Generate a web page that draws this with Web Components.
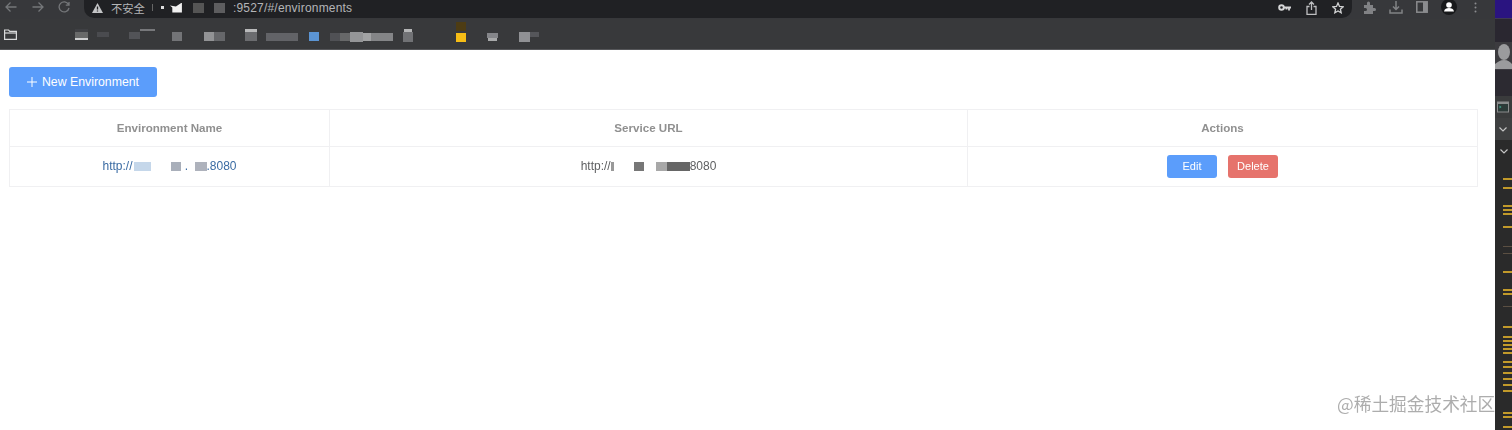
<!DOCTYPE html>
<html lang="zh"><head><meta charset="utf-8"><title>Environments</title>
<style>
html,body{margin:0;padding:0;background:#fff;overflow:hidden}
body{width:1512px;height:430px;font-family:"Liberation Sans","Noto Sans CJK SC",sans-serif}
</style></head><body>
<app-shell>
  <browser-window>
    <browser-toolbar></browser-toolbar>
    <bookmark-bar></bookmark-bar>
    <env-page></env-page>
  </browser-window>
  <side-rail></side-rail>
</app-shell>
<script>
function def(name,html,setup){
  customElements.define(name,class extends HTMLElement{
    constructor(){super();this.attachShadow({mode:'open'}).innerHTML=html;}
    connectedCallback(){if(setup)setup(this.shadowRoot,this);}
  });
}
def('app-shell',`<style>:host{display:flex;width:1512px;height:430px;position:relative;overflow:hidden}</style><slot></slot>
<div style="position:absolute;left:1337px;top:391px;font:17.700px/25px 'Noto Sans CJK SC',sans-serif;color:#adadad;white-space:nowrap;filter:blur(.3px)">@稀土掘金技术社区</div>`);
def('browser-window',`<style>:host{display:flex;flex-direction:column;width:1495px;flex:none;height:430px}</style><slot></slot>`);

const ic=(w,h,body,ml)=>`<svg width="${w}" height="${h}" viewBox="0 0 ${w} ${h}" style="flex:none;margin-left:${ml}px" fill="none" stroke="#9fa1a4" stroke-width="1.3">${body}</svg>`;
def('browser-toolbar',`<style>
:host{display:flex;align-items:flex-start;height:19px;background:#37383b;flex:none;color:#b4b5b7}
.bar{display:flex;align-items:center;box-sizing:border-box;width:1268px;height:18px;padding-bottom:3px;margin-left:14px;background:#202124;border-radius:0 0 10px 10px;flex:none}
.t{white-space:nowrap}
b{display:block;flex:none;filter:blur(.5px)}
.nav,.right{display:flex;align-items:center;height:14px;flex:none}
</style>
<div class="nav">
${ic(12,12,'<path d="M11.500 6H1M5.500 1.500 1 6l4.500 4.500" stroke="#75777a"/>',5)}
${ic(12,12,'<path d="M.5 6H11M6.500 1.500 11 6l-4.500 4.500" stroke="#75777a"/>',15)}
${ic(12,12,'<path d="M10.500 3.500A5 5 0 1 0 11 7M11 1v3.200H7.800" stroke="#75777a"/>',14)}
</div>
<div class="bar">
${ic(11,10,'<path d="M5.500 0 11 10H0z" fill="#c4c5c7" stroke="none"/><path d="M5.500 3.500v3M5.500 7.500v1" stroke="#202124"/>',8)}
<span class="t" style="margin-left:8px;font-size:11.300px">不安全</span>
<b style="width:1px;height:7px;background:#666;margin-left:7px"></b>
<b style="width:3px;height:3px;background:#ddd;margin-left:8px"></b>
<b style="width:12px;height:10px;background:#f1f1f1;margin-left:6px;clip-path:polygon(100% 0,100% 100%,20% 100%,20% 50%,0 30%,50% 40%)"></b>
<b style="width:11px;height:10px;background:#555;margin-left:11px"></b>
<b style="width:11px;height:10px;background:#5d5d5f;margin-left:10px"></b>
<span class="t" style="margin-left:8px;font-size:12px;letter-spacing:.2px">:9527/#/environments</span>
<span style="flex:1"></span>
${ic(13,9,'<circle cx="3.500" cy="4.500" r="2.300" stroke-width="2" stroke="#d5d6d7"/><path d="M6 4.500h7M11 4.500v3M8.500 4.500v2" stroke-width="1.800" stroke="#d5d6d7"/>',0)}
${ic(11,14,'<path d="M5.500 9V1M3 3.500 5.500 1 8 3.500M3.500 5.500H1v8h9v-8H7.500" stroke="#bdbec0"/>',15)}
${ic(12,12,'<path d="M6 1l1.500 3.400 3.700.4-2.800 2.400.8 3.600L6 9l-3.200 1.800.8-3.600L.8 4.800l3.700-.4z" stroke="#d0d1d2"/>',15)}
<span style="width:8px;flex:none"></span>
</div>
<div class="right">
${ic(13,13,'<path d="M1 4h3V2a1.500 1.500 0 0 1 3 0v2h3v3h1.500a1.500 1.500 0 0 1 0 3H10v3H1v-3h1.500a1.500 1.500 0 0 0 0-3H1z" fill="#818285" stroke="none"/>',11)}
${ic(14,14,'<path d="M7 9V1M4 6.500 7 9.500l3-3M1 9.500V13h12V9.500" stroke="#818285" stroke-width="1.500"/>',13)}
${ic(12,12,'<rect x=".8" y=".8" width="10.400" height="10.400" stroke="#8b8c8f" stroke-width="1.500"/><rect x="7" y="1" width="4" height="10" fill="#8b8c8f" stroke="none"/>',13)}
<svg width="16" height="16" viewBox="0 0 16 16" style="flex:none;margin-left:13px"><circle cx="8" cy="8" r="8" fill="#18191b"/><circle cx="8" cy="6" r="2.800" fill="#fff"/><path d="M3 12.500c.5-2.800 2.600-3.500 5-3.500s4.500.7 5 3.500z" fill="#fff"/></svg>
<svg width="3" height="11" viewBox="0 0 3 11" style="flex:none;margin-left:17px" fill="#8b8c8f"><circle cx="1.500" cy="1.500" r="1"/><circle cx="1.500" cy="5.500" r="1"/><circle cx="1.500" cy="9.500" r="1"/></svg>
</div>`);

/* x, width, y, height, colour, extra css of each blurred bookmark */
const marks=[
[75,13,32,6,'#686969','box-shadow:0 2px 0 #cfd0d1,0 -3px 0 -0px #3f4044'],
[97,12,32,5,'#4a4b4f'],
[129,11,32,7,'#525357'],
[140,15,29,2,'#77787b'],
[172,10,32,9,'#737477'],
[204,10,32,9,'#929395'],
[214,11,32,9,'#66676a'],
[245,12,32,9,'#6b6c6f','box-shadow:0 -3px 0 #b9babb'],
[266,32,33,8,'#626367'],
[309,10,32,9,'#5b94d3'],
[330,10,33,8,'#505155'],
[340,10,33,8,'#676869'],
[350,13,32,10,'#949597'],
[363,8,33,8,'#a2a3a4'],
[371,22,33,8,'#848587'],
[403,10,32,10,'#717275','box-shadow:0 -4px 0 -1px #b5b6b7'],
[456,10,33,9,'#f6bd16','box-shadow:0 -11px 0 #4d3c14'],
[487,11,33,5,'#85868a','box-shadow:0 4px 0 -1px #a8a9aa'],
[519,11,32,10,'#909194'],
[530,9,32,5,'#55565a']];
let px=17;
def('bookmark-bar',`<style>
:host{display:flex;align-items:flex-start;padding-left:4px;background:#38393b;border-bottom:1px solid #56575a;flex:none;box-sizing:border-box;height:31px}
i{display:block;flex:none;filter:blur(.6px)}
</style>
<svg width="13" height="11" viewBox="0 0 13 11" style="flex:none;margin-top:10px" fill="none" stroke="#d8d9da" stroke-width="1.200"><path d="M.6 10.400V1h4l1.200 1.400h6.600v8z"/><path d="M.6 4h12"/></svg>
${marks.map(m=>{const s=`<i style="width:${m[1]}px;height:${m[3]}px;margin-top:${m[2]-19}px;background:${m[4]};margin-left:${m[0]-px}px;${m[5]||''}"></i>`;px=m[0]+m[1];return s;}).join('')}`);

def('blur-mask',`<style>:host{display:inline-block;width:var(--w);height:9px;background:var(--c);vertical-align:-1px;filter:blur(.7px);margin-left:var(--m,0)}</style>`);
def('ui-button',`<style>
:host{display:inline-flex;align-items:center;justify-content:center;box-sizing:border-box;border-radius:3px;color:#fff;background:var(--bg);width:var(--bw);height:var(--bh);font-size:var(--fs);flex:none;gap:var(--gap,0)}
</style><slot></slot>`);
def('env-page',`<style>
:host{display:block;flex:1;background:#fff;padding:17px 18px 0 9px;color:#5f6062}
.tb{display:flex;margin-bottom:12px}
table{width:1469px;border-collapse:collapse;table-layout:fixed;border:1px solid #f0f0f2;font-size:12px}
th,td{border:1px solid #f0f0f2;text-align:center;padding:0 0 1px}
th{height:35px;font-weight:bold;color:#909090;font-size:11.600px}
td{height:38px}
a{color:#3a6ba3}
.acts{display:flex;justify-content:center;gap:11px}
svg{flex:none}
.soft{filter:blur(.25px)}
</style>
<div class="tb"><ui-button style="--bg:#5b9dfb;--bw:148px;--bh:30px;--fs:12.300px;--gap:5px">
<svg width="10" height="10" viewBox="0 0 10 10" stroke="#fff" stroke-width="1"><path d="M5 0v10M0 5h10"/></svg>New Environment</ui-button></div>
<table class="soft"><colgroup><col style="width:320px"><col style="width:638px"><col></colgroup>
<tr><th>Environment Name</th><th>Service URL</th><th>Actions</th></tr>
<tr><td><a>http://<blur-mask style="--w:17px;--c:#c5d7ea;--m:2px"></blur-mask><blur-mask style="--w:10px;--c:#a9afba;--m:20px"></blur-mask> . <blur-mask style="--w:12px;--c:#aeb2bc;--m:3px"></blur-mask>.8080</a></td>
<td>http://<blur-mask style="--w:3px;--c:#999;--m:0"></blur-mask><blur-mask style="--w:10px;--c:#777;--m:20px"></blur-mask><blur-mask style="--w:11px;--c:#a8a8a8;--m:12px"></blur-mask><blur-mask style="--w:23px;--c:#666"></blur-mask>8080</td>
<td><div class="acts"><ui-button style="--bg:#5b9dfb;--bw:50px;--bh:23px;--fs:11px">Edit</ui-button><ui-button style="--bg:#e6736c;--bw:50px;--bh:23px;--fs:11px">Delete</ui-button></div></td></tr>
</table>`);

const dashes=[[178,2,1],[187,2,1],[205,2,1],[209,2,1],[213,2,1],[226,2,1],[246,1,0],[253,1,0],[271,2,1],[289,2,1],[293,2,1],[306,1,0],[326,2,1],[336,2,1],[340,2,1],[344,2,1],[348,2,1],[352,2,1],[361,2,1],[366,2,1],[372,2,1],[378,2,1],[384,2,1],[390,2,1],[412,2,1],[416,2,1],[426,2,1]];
let dy=162;
def('side-rail',`<style>
:host{display:flex;flex-direction:column;width:17px;flex:none;height:430px;background:#2a2a2a;overflow:hidden}
.top{height:19px;background:#2a1480;border-bottom:1px solid #3f3a52;box-sizing:border-box;flex:none}
.dark{height:23px;background:#2a2730;flex:none}
.av{height:27px;flex:none;overflow:hidden;display:block}
.g{height:27px;background:#2c2a31;flex:none;border-top:1px solid #3c3a40;box-sizing:border-box}
.term{height:22px;background:#3a3b3c;display:flex;align-items:center;padding-left:2px;flex:none}
.c1{height:22px;background:#3e3f40;display:flex;align-items:center;padding-left:4px;flex:none}
.c2{height:22px;display:flex;align-items:center;padding-left:5px;flex:none}
i{display:block;flex:none;margin-left:8px}
svg{flex:none;display:block}
.list{flex:none}
</style>
<div class="top"></div><div class="dark"></div>
<div class="av"><svg width="17" height="27" viewBox="0 0 17 27"><rect width="17" height="27" fill="#3c3b3f"/><ellipse cx="9" cy="10" rx="6" ry="8" fill="#9b9b9d"/><path d="M0 27v-5c3-2 5-4 9-4s6 2 8 4v5z" fill="#9b9b9d"/></svg></div>
<div class="g"></div>
<div class="term"><svg width="12" height="12" viewBox="0 0 12 12"><rect width="12" height="11" y="0.500" fill="#8a8b8c"/><rect x="1" y="3" width="10" height="7.500" fill="#2c3a38"/><path d="M2.500 4.500l2 1.500-2 1.500z" fill="#3fa58c"/></svg></div>
<div class="c1"><svg width="8" height="5" viewBox="0 0 8 5" fill="none" stroke="#c4c4c4" stroke-width="1.200"><path d="M.5.500 4 4 7.500.500"/></svg></div>
<div class="c2"><svg width="8" height="5" viewBox="0 0 8 5" fill="none" stroke="#c4c4c4" stroke-width="1.200"><path d="M.5.500 4 4 7.500.500"/></svg></div>
<div class="list" id="l"></div>`,(r)=>{
  r.getElementById('l').innerHTML=dashes.map(d=>{const s=`<i style="height:${d[1]}px;background:${d[2]?'#c29a2a':'#5b4f42'};margin-top:${d[0]-dy}px"></i>`;dy=d[0]+d[1];return s;}).join('');
});
</script>
</body></html>
